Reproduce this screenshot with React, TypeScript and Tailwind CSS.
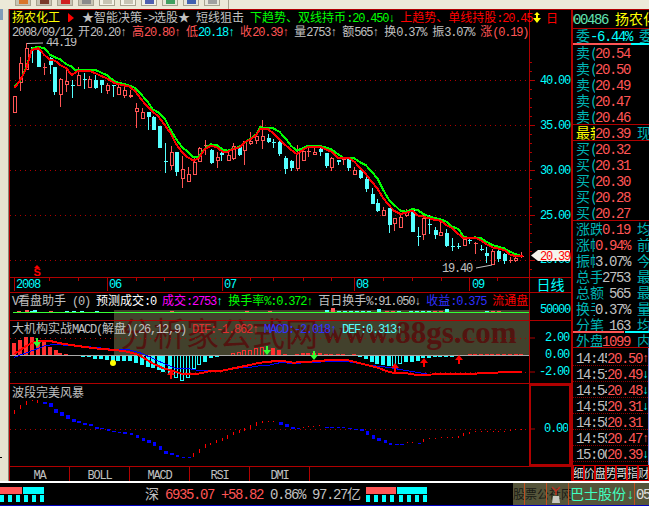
import React from "react";

const RED = "#ff5555";
const CYAN = "#55ffff";

// candles read off the chart: [x, wickTop, wickBottom, bodyTop, bodyBottom, colour]
type Candle = [number, number, number, number, number, "r" | "c"];

const candlesLeft: Candle[] = [
  [43, 168, 218, 168, 218, "r"], [61, 50, 152, 70, 128, "r"], [79, 10, 90, 25, 88, "r"], [97, 20, 68, 22, 25, "c"],
  [115, 30, 80, 30, 80, "c"], [133, 70, 105, 82, 84, "r"], [151, 50, 102, 55, 75, "c"], [163, 80, 165, 80, 155, "c"],
  [181, 115, 200, 117, 163, "r"], [199, 85, 155, 123, 133, "r"], [217, 120, 173, 134, 136, "c"], [233, 80, 137, 105, 137, "r"],
  [251, 100, 147, 118, 122, "c"], [268, 108, 143, 118, 143, "r"], [286, 105, 147, 120, 145, "c"], [302, 120, 158, 120, 135, "c"],
  [320, 130, 162, 135, 152, "r"], [338, 135, 170, 136, 138, "c"], [355, 135, 165, 141, 162, "r"], [371, 140, 173, 150, 165, "r"],
  [389, 150, 173, 165, 170, "r"], [407, 190, 265, 205, 215, "r"], [425, 205, 237, 217, 235, "r"], [443, 215, 270, 217, 232, "c"],
  [458, 228, 270, 230, 270, "c"], [476, 258, 323, 258, 323, "c"], [494, 310, 398, 363, 366, "c"], [512, 318, 390, 337, 377, "r"],
  [527, 335, 407, 337, 395, "c"], [545, 348, 443, 388, 415, "r"], [563, 380, 425, 403, 425, "r"], [581, 355, 402, 367, 402, "r"],
  [596, 322, 365, 325, 365, "r"], [614, 300, 345, 316, 320, "r"], [632, 327, 372, 330, 370, "c"], [650, 337, 385, 352, 362, "r"],
  [664, 337, 362, 338, 345, "c"], [683, 335, 360, 345, 360, "r"], [700, 308, 360, 318, 355, "r"], [718, 315, 348, 322, 345, "c"],
  [733, 305, 375, 305, 330, "r"], [751, 275, 315, 305, 310, "r"], [769, 280, 312, 290, 300, "r"],
];

const candlesRight: Candle[] = [
  [7, 30, 118, 78, 90, "r"], [25, 72, 100, 83, 95, "c"], [40, 88, 113, 96, 98, "c"], [58, 88, 138, 95, 132, "c"],
  [76, 138, 192, 144, 177, "c"], [94, 150, 183, 152, 175, "c"], [110, 105, 183, 130, 175, "r"], [128, 112, 153, 123, 152, "r"],
  [145, 110, 140, 124, 126, "r"], [163, 110, 135, 128, 133, "r"], [179, 112, 138, 117, 125, "c"], [197, 128, 173, 128, 168, "c"],
  [214, 140, 183, 145, 172, "r"], [233, 150, 165, 150, 156, "c"], [249, 143, 165, 148, 152, "r"], [265, 145, 182, 148, 175, "c"],
  [283, 172, 195, 180, 192, "r"], [301, 178, 207, 180, 203, "c"], [317, 195, 247, 208, 237, "c"], [335, 235, 282, 252, 282, "c"],
  [352, 268, 307, 280, 303, "c"], [370, 290, 318, 300, 316, "r"], [386, 294, 368, 294, 344, "c"], [403, 323, 363, 326, 340, "r"],
  [421, 310, 355, 322, 353, "r"], [439, 298, 322, 305, 316, "r"], [457, 295, 366, 295, 365, "c"], [473, 350, 408, 379, 381, "c"],
  [490, 315, 390, 325, 373, "r"], [508, 315, 372, 342, 344, "c"], [526, 350, 388, 360, 375, "c"], [541, 330, 378, 366, 377, "r"],
  [559, 357, 410, 370, 408, "c"], [577, 385, 423, 409, 411, "c"], [595, 400, 417, 407, 409, "c"], [611, 377, 408, 388, 407, "r"],
  [628, 385, 403, 389, 391, "c"], [646, 395, 432, 399, 401, "r"], [664, 405, 423, 417, 419, "c"], [679, 410, 458, 428, 437, "c"],
  [697, 418, 466, 423, 463, "r"], [715, 420, 455, 423, 446, "c"], [733, 430, 462, 432, 452, "c"], [749, 440, 460, 449, 451, "r"],
  [766, 440, 456, 445, 452, "r"], [784, 425, 443, 439, 441, "r"],
];

const leftPts = (pts: number[][]) => pts.map(([x, y]) => `${x / 3},${40 + y / 3}`).join(" ");
const rightPts = (pts: number[][]) => pts.map(([x, y]) => `${260 + x / 3},${110 + y / 3}`).join(" ");

const maRed =
  leftPts([[43,145],[61,120],[79,85],[95,30],[115,25],[133,45],[151,60],[165,62],[181,75],[199,85],[215,105],[233,93],[268,92],[286,100],[320,115],[345,130],[389,140],[407,155],[425,180],[443,200],[458,215],[476,230],[494,255],[512,280],[527,310],[545,335],[563,352],[581,362],[596,355],[614,328],[632,317],[650,322],[668,335],[683,335],[700,327],[718,322],[733,307],[751,298],[769,285]]) +
  " " +
  rightPts([[0,58],[25,58],[40,70],[58,88],[76,105],[94,120],[110,132],[128,120],[145,110],[179,110],[197,118],[214,125],[233,143],[265,143],[283,155],[301,175],[317,192],[335,215],[352,235],[370,265],[386,285],[403,303],[421,312],[439,308],[457,302],[473,316],[490,320],[526,330],[541,332],[559,345],[577,355],[595,372],[611,385],[628,385],[646,383],[664,392],[679,402],[697,412],[733,420],[749,433],[766,438],[788,438]]);

const maGreen =
  leftPts([[43,140],[61,122],[79,82],[97,25],[115,20],[133,25],[151,45],[165,52],[181,58],[199,73],[215,80],[225,90],[268,90],[286,90],[320,105],[345,125],[389,137],[407,145],[425,165],[443,185],[458,208],[476,218],[494,235],[512,270],[527,295],[545,320],[563,335],[581,352],[596,350],[614,326],[632,313],[650,315],[668,328],[683,332],[718,320],[769,283]]) +
  " " +
  rightPts([[0,52],[40,55],[58,65],[76,85],[94,108],[110,122],[128,115],[145,107],[179,108],[197,112],[214,118],[233,132],[249,143],[283,145],[301,157],[317,165],[335,185],[352,205],[370,240],[386,268],[403,285],[421,302],[439,305],[457,297],[473,300],[490,312],[508,320],[541,328],[559,335],[577,350],[595,357],[611,380],[628,385],[646,382],[664,385],[679,395],[697,405],[733,415],[749,425],[766,432],[784,438]]);

const macdRed =
  [[43,282],[61,270],[79,258],[97,248],[115,245],[133,243],[151,243],[181,250],[233,258],[286,265],[320,268],[371,273],[407,282],[425,290],[458,310],[490,325],[527,335],[545,341],[596,341],[632,333],[668,332],[700,325],[750,315],[780,308]].map(([x, y]) => `${x / 3},${260 + y / 3}`).join(" ") +
  " " +
  [[0,308],[30,305],[60,302],[100,308],[150,305],[200,301],[265,301],[300,310],[350,322],[385,335],[405,340],[440,340],[470,345],[560,342],[620,342],[700,338],[785,335]].map(([x, y]) => `${260 + x / 3},${260 + y / 3}`).join(" ");

const macdBlue =
  [[43,292],[61,285],[97,272],[133,258],[160,253],[233,258],[286,262],[338,268],[389,270],[425,280],[458,295],[490,310],[527,325],[563,325],[596,332],[632,332],[668,330],[700,325],[750,322],[780,317]].map(([x, y]) => `${x / 3},${260 + y / 3}`).join(" ") +
  " " +
  [[0,315],[30,315],[60,308],[100,310],[150,308],[200,305],[265,305],[320,315],[385,322],[440,332],[500,342],[600,345],[650,342],[700,338],[785,338]].map(([x, y]) => `${260 + x / 3},${260 + y / 3}`).join(" ");

// histogram: [page x, tip y in crop coords, colour, hollow]
const macdBarsLeft: [number, number, string, boolean?][] = [
  [43,248,"r"],[61,240,"r"],[79,232,"r"],[97,230,"r"],[115,240,"r"],[133,243,"r"],[151,260,"r"],[167,270,"r"],[181,278,"r"],[199,283,"r"],
  [250,290,"c"],[268,292,"c"],[286,297,"c"],[302,297,"c"],[320,300,"c"],[338,303,"c"],[355,303,"c"],[371,303,"c"],[389,303,"c"],[407,310,"c"],[425,315,"c"],[443,320,"c"],[458,325,"c"],[476,330,"c"],[490,335,"c"],[510,345,"c"],[527,352,"c",true],[545,362,"c",true],[563,352,"c",true],[581,325,"c",true],[596,313,"c",true],[614,305,"c"],[632,295,"c"],[650,290,"c"],
  [700,280,"r",true],[717,278,"r",true],[733,272,"r",true],[751,270,"r",true],[769,265,"r",true],[785,262,"r",true],
];
const macdBarsRight: [number, number, string, boolean?][] = [
  [5,262,"r",true],[40,264,"r"],[58,270,"r"],[75,281,"r"],[110,282,"r"],[128,280,"r"],[145,280,"r"],[163,280,"r"],[179,278,"r"],[197,282,"r"],[214,282,"r"],[233,282,"r"],[249,282,"r"],[283,282,"r"],
  [300,292,"c"],[317,297,"c"],[335,305,"c"],[352,312,"c"],[370,315,"c"],[386,318,"c"],[403,315,"c",true],[421,310,"c",true],[439,305,"c"],[457,305,"c"],[473,303,"c"],[490,295,"c"],[508,293,"c"],[526,290,"c"],[541,290,"c"],[559,290,"c"],[577,292,"c"],
  [630,282,"r"],[645,282,"r"],[662,282,"r"],[680,282,"r"],[697,283,"r"],[715,282,"r"],[732,283,"r"],[750,283,"r"],[767,282,"r"],[784,283,"r"],
];

// wave dots: [crop x, crop y, blue?]
const waveLeft: [number, number, boolean][] = [
  [43,96,false],[61,82,false],[79,68,false],[95,60,false],[112,64,false],[130,70,true],[148,74,true],[163,92,true],[181,101,true],[199,112,true],[217,121,true],[232,126,true],[250,131,true],[268,135,true],[286,144,true],[301,146,true],[320,150,true],[337,155,true],[353,156,true],[370,159,true],[389,162,true],[407,170,true],[425,178,true],[442,185,true],[458,192,true],[476,204,true],[493,218,true],[511,222,true],[527,229,true],[545,232,true],[563,232,true],[580,226,false],[596,212,false],[614,197,false],[631,192,false],[649,185,false],[665,178,false],[682,170,false],[700,160,false],[717,155,false],[733,148,false],[751,140,false],[769,132,false],[787,125,false],[805,124,false],[820,124,false],[838,130,true],[856,137,true],[874,145,true],[890,146,true],
];
const waveRight: [number, number, boolean][] = [
  [5,146,true],[20,146,true],[38,142,false],[55,140,false],[70,139,false],[88,136,false],[105,143,true],[120,142,true],[140,143,true],[155,143,true],[175,145,true],[192,148,true],[210,150,true],[227,158,true],[245,170,true],[262,178,true],[281,185,true],[296,192,true],[315,193,true],[330,193,true],[350,187,false],[365,186,false],[383,190,true],[400,182,false],[418,176,false],[436,175,false],[454,172,false],[470,171,false],[487,171,false],[505,171,false],[520,163,false],[538,158,false],[555,154,false],[573,154,false],[590,153,false],[608,153,false],[625,153,false],[642,153,false],[660,151,false],[675,148,false],[693,147,false],
];
const waveDots = [
  ...waveLeft.map(([x, y, b]) => ({ x: x / 3, y: 380 + y / 3, blue: b })),
  ...waveRight.map(([x, y, b]) => ({ x: 290 + x / 3, y: 380 + y / 3, blue: b })),
];

const volBars: [number, number, string][] = [
  [17,1,RED],[25,2,RED],[30,1,CYAN],[33,2,CYAN],[49,1,RED],[65,1,CYAN],[72,1,CYAN],[80,1,CYAN],[95,1,CYAN],[170,1,RED],[245,1,RED],[268,1,RED],[325,2,CYAN],[331,4,RED],[337,1,CYAN],[343,1,CYAN],[349,1,CYAN],[355,1,CYAN],[361,1,CYAN],[367,1,CYAN],[377,3,CYAN],[385,1,RED],[391,1,RED],[397,1,CYAN],[409,1,CYAN],[415,1,CYAN],[421,1,CYAN],[427,1,CYAN],[433,1,RED],[439,1,RED],[445,3,CYAN],[485,1,CYAN],[491,1,RED],[497,1,RED],
];

function T({ text, big, className }: { text: string; big?: boolean; className?: string }) {
  const parts = text.split(/([^\x00-\x7f↑↓]+)/);
  return (
    <span className={className}>
      {parts.map((part, i) =>
        i % 2 === 1 ? (
          <span key={i} className={big ? "font-['Noto_Sans_CJK_SC'] text-[14px]" : "font-['Noto_Sans_CJK_SC'] text-[12px]"}>
            {part}
          </span>
        ) : (
          <span key={i} className={big ? "font-['Liberation_Mono'] text-[14px] tracking-[-1.4px]" : "font-['Liberation_Mono'] text-[12px] tracking-[-1.2px]"}>
            {part}
          </span>
        )
      )}
    </span>
  );
}

function Candles({ data, ox, oy }: { data: Candle[]; ox: number; oy: number }) {
  return (
    <g shapeRendering="crispEdges">
      {data.map(([zx, wt, wb, bt, bb, c], i) => {
        const x = Math.round(ox + zx / 3) + 0.5;
        const color = c === "r" ? RED : CYAN;
        const top = oy + bt / 3;
        const h = Math.max(1, (bb - bt) / 3);
        return (
          <g key={i}>
            <line x1={x} x2={x} y1={oy + wt / 3} y2={oy + wb / 3} stroke={color} />
            {h <= 1.5 ? (
              <rect x={x - 2} y={top} width={4} height={1} fill={color} />
            ) : c === "r" ? (
              <rect x={x - 1.5} y={top} width={3} height={h} fill="#000" stroke={color} />
            ) : (
              <rect x={x - 1.5} y={top} width={3.5} height={h} fill={color} />
            )}
          </g>
        );
      })}
    </g>
  );
}

function AxisText({ x, y, fill = "#00ffff", children }: { x: number; y: number; fill?: string; children: React.ReactNode }) {
  return (
    <text x={x} y={y} fill={fill} className="font-['Liberation_Mono'] text-[12px] tracking-[-1.2px]">
      {children}
    </text>
  );
}

function Arrow({ x, y, up, color }: { x: number; y: number; up?: boolean; color: string }) {
  const s = up ? -1 : 1;
  return (
    <polygon
      fill={color}
      points={`${x - 1},${y - 4 * s} ${x + 1},${y - 4 * s} ${x + 1},${y} ${x + 4},${y} ${x},${y + 5 * s} ${x - 4},${y} ${x - 1},${y}`}
    />
  );
}

function Meter({ wide }: { wide?: boolean }) {
  const squares = wide ? [0, 1, 2, 3, 4, 5, 6, 7] : [0, 1, 2, 3, 4, 5];
  return (
    <div className={wide ? "w-[61px] shrink-0 pt-[4px]" : "w-[44px] shrink-0 pt-[4px]"}>
      <div className="flex h-[7px] gap-px">
        <div className="flex-1 bg-[#ff5555]" />
        <div className="flex-1 bg-[#00ffff]" />
      </div>
      <div className="mt-[1px] flex h-[7px] justify-between">
        {squares.map((s) => (
          <div key={s} className="w-[4px] bg-[#00ffff]" />
        ))}
      </div>
    </div>
  );
}

function QuoteRow({ label, value, tail, valueClass = "text-[#ff5555]" }: { label: string; value: string; tail?: string; valueClass?: string }) {
  return (
    <div className="flex h-4 items-center whitespace-pre pl-[3px] leading-4">
      <div className="min-w-0 flex-1 overflow-hidden">
        <T big text={label} className="text-[#00b4b4]" />
      </div>
      <T big text={value} className={`shrink-0 ${valueClass}`} />
      <div className="ml-[7px] w-[12px] shrink-0 overflow-hidden">
        {tail ? <T big text={tail} className="text-[#00b4b4]" /> : null}
      </div>
    </div>
  );
}

const sells = ["20.54", "20.50", "20.49", "20.47", "20.46"];
const buys = ["20.32", "20.31", "20.30", "20.28", "20.27"];
const stats = [
  { label: "涨跌", value: "0.19", tail: "均", valueClass: "text-[#ff5555]" },
  { label: "涨幅", value: "0.94%", tail: "前", valueClass: "text-[#ff5555]" },
  { label: "振幅", value: "3.07%", tail: "今", valueClass: "text-[#c0c0c0]" },
  { label: "总手", value: "2753", tail: "最", valueClass: "text-[#c0c0c0]" },
  { label: "总额", value: "565", tail: "最", valueClass: "text-[#c0c0c0]" },
  { label: "换手", value: "0.37%", tail: "量", valueClass: "text-[#c0c0c0]" },
];
const trades = [
  { time: "14:45", price: "20.50", arrow: "↑", up: true },
  { time: "14:51", price: "20.49", arrow: "↓", up: false },
  { time: "14:54", price: "20.48", arrow: "↓", up: false },
  { time: "14:55", price: "20.31", arrow: "↓", up: false },
  { time: "14:58", price: "20.31", arrow: "", up: false },
  { time: "14:59", price: "20.47", arrow: "↑", up: true },
  { time: "15:00", price: "20.39", arrow: "↓", up: false },
];
const tabs = ["MA", "BOLL", "MACD", "RSI", "DMI"];
const panelTabs = ["细", "价", "盘", "势", "哥", "指", "财"];
const toolButtons = [
  { bg: "bg-[#c8c4b4]", color: "#d9752a" },
  { bg: "bg-[#c8c4b4]", color: "#7a3a2a" },
  { bg: "bg-[#c8c4b4]", color: "#d02020" },
  { bg: "bg-[#c8c4b4]", color: "#8a8a8a" },
  { bg: "bg-[#f4f2e8]", color: "#c8c4b4" },
  { bg: "bg-[#f4f2e8]", color: "#c8c4b4" },
  { bg: "bg-[#f4f2e8]", color: "#5060b0" },
  { bg: "bg-[#e8e6da]", color: "#40a060" },
  { bg: "bg-[#e8e6da]", color: "#4060b0" },
  { bg: "bg-[#e8e6da]", color: "#a0a0a0" },
];

export default function App() {
  return (
    <div className="flex h-[506px] w-[649px] flex-col overflow-hidden bg-black">
      {/* toolbar */}
      <div className="flex h-[9px] items-start gap-[5px] bg-[#ece9d8] pl-[15px]">
        {toolButtons.map((b, i) => (
          <div key={i} className={`flex h-[6px] w-[16px] items-start justify-center border border-t-0 border-[#a8a490] ${b.bg}`}>
            <div className="h-[4px] w-[9px]" style={{ backgroundColor: b.color }} />
          </div>
        ))}
        <div className="ml-[3px] h-[9px] w-px bg-[#a8a490]" />
      </div>

      <div className="flex h-[472px]">
        {/* left strip */}
        <div className="w-[9px] shrink-0 border-r border-[#8a8878] bg-[#e6e3d0]">
          <div className="h-[11px] w-[3px] bg-[#7f9db9]" />
          <div className="mt-[437px] h-px w-[2px] bg-black" />
        </div>

        {/* chart column */}
        <div className="relative w-[562px] shrink-0 border-t border-l border-[#b00000]">
          {/* watermark sits under the panes */}
          <div className="absolute top-[300px] left-[104px] flex h-[45px] w-[416px] items-center overflow-hidden whitespace-pre bg-[#42412c] pl-[6px] leading-[45px] text-[#521410]">
            <span className="font-['Noto_Sans_CJK_SC'] text-[33px]">分析家公式网</span>
            <span className="ml-[4px] font-['Liberation_Serif'] text-[31px] font-bold">www.88gs.com</span>
          </div>

          {/* main pane */}
          <div className="relative flex h-[267px]">
            <div className="relative z-10 w-[519px]">
              <div className="flex h-[14px] items-center whitespace-pre pl-[2px] leading-[14px]">
                <T text="扬农化工" className="text-[#ffff00]" />
                <svg width="6" height="9" viewBox="0 0 6 9" className="ml-[8px] mr-[8px] shrink-0">
                  <polygon points="0,0 6,5 1,9 0,9" fill="#ff0000" />
                </svg>
                <T text="★智能决策->选股★ 短线狙击 " className="text-[#c0c0c0]" />
                <T text="下趋势、双线持币:20.450↓ " className="text-[#00ff00]" />
                <T text="上趋势、单线持股:20.45" className="text-[#ff0000]" />
              </div>
              <div className="flex h-[14px] items-center whitespace-pre pl-[2px] leading-[14px]">
                <T text="2008/09/12 开20.20↑ " className="text-[#c0c0c0]" />
                <T text="高20.80↑ " className="text-[#ff5555]" />
                <T text="低" className="text-[#ff5555]" />
                <T text="20.18↑ " className="text-[#00ffff]" />
                <T text="收20.39↑ " className="text-[#ff5555]" />
                <T text="量2753↑ 额565↑ 换0.37% 振3.07% " className="text-[#c0c0c0]" />
                <T text="涨(0.19)" className="text-[#ff5555]" />
              </div>
              <svg width="519" height="239" viewBox="10 38 519 239" className="block">
                {[80.5, 125.5, 170.5, 215.5, 260.5].map((y) => (
                  <line key={y} x1="10" x2="529" y1={y} y2={y} stroke="#b00000" strokeDasharray="1 4" />
                ))}
                <Candles data={candlesLeft} ox={0} oy={40} />
                <Candles data={candlesRight} ox={260} oy={110} />
                <polyline points={maGreen} fill="none" stroke="#00ff00" strokeWidth="2" shapeRendering="crispEdges" />
                <polyline points={maRed} fill="none" stroke="#ff0000" strokeWidth="2" shapeRendering="crispEdges" />
                <polyline points="27,43.5 43,43" fill="none" stroke="#c0c0c0" />
                <AxisText x={46} y={46} fill="#c0c0c0">44.19</AxisText>
                <AxisText x={442} y={272} fill="#c0c0c0">19.40</AxisText>
                <polyline points="476,268 492,265" fill="none" stroke="#c0c0c0" />
                <polygon points="37,265 34,268 40,268" fill="#ff0000" />
                <text x="33.5" y="276" fill="#ff0000" className="font-['Liberation_Sans'] text-[11px] font-bold">S</text>
              </svg>
            </div>
            <div className="relative w-[42px] border-l border-[#b00000]">
              <div className="flex h-[14px] items-center pl-[3px]">
                <svg width="8" height="11" viewBox="0 0 8 11" className="shrink-0">
                  <path d="M4 0 L7 3 L5 3 L5 6 L8 6 L4 11 L0 6 L3 6 L3 3 L1 3 Z" fill="#ffff00" />
                </svg>
                <T text="日" className="ml-[5px] text-[#ff0000]" />
              </div>
              <svg width="41" height="253" viewBox="530 24 41 253" className="block">
                <g stroke="#b00000" shapeRendering="crispEdges">
                  {[80, 125, 170, 215, 260].map((y) => (
                    <line key={y} x1="530" x2="535" y1={y} y2={y} />
                  ))}
                  {[62, 71, 89, 98, 107, 116, 134, 143, 152, 161, 179, 188, 197, 206, 224, 233, 242, 251, 269].map((y) => (
                    <line key={y} x1="530" x2="532" y1={y} y2={y} />
                  ))}
                </g>
                <AxisText x={540} y={84}>40.00</AxisText>
                <AxisText x={540} y={129}>35.00</AxisText>
                <AxisText x={540} y={174}>30.00</AxisText>
                <AxisText x={540} y={219}>25.00</AxisText>
                <AxisText x={540} y={263}>20.00</AxisText>
                <polygon points="531,255.5 538,250 570,250 570,261 538,261" fill="#f4f4ec" />
                <AxisText x={540} y={259.5} fill="#ff0000">20.39</AxisText>
              </svg>
            </div>
          </div>

          {/* date axis */}
          <div className="relative flex h-[15px] border-t border-[#b00000]">
            <div className="relative z-10 w-[519px]">
              <svg width="519" height="14" viewBox="10 278 519 14" className="block">
                <g stroke="#b00000" shapeRendering="crispEdges">
                  {[14, 107, 222, 354, 469].map((x) => (
                    <line key={x} x1={x} x2={x} y1="278" y2="291" />
                  ))}
                  {[49, 78, 136, 164, 193, 250, 273, 303, 331, 383, 412, 441, 497].map((x) => (
                    <line key={x} x1={x} x2={x} y1="278" y2="281" />
                  ))}
                </g>
                <AxisText x={16} y={288}>2008</AxisText>
                <AxisText x={109} y={288}>06</AxisText>
                <AxisText x={224} y={288}>07</AxisText>
                <AxisText x={356} y={288}>08</AxisText>
                <AxisText x={472} y={288}>09</AxisText>
              </svg>
            </div>
            <div className="flex w-[42px] items-center justify-center border-l border-[#b00000] leading-[14px]">
              <T big text="日线" className="text-[#00ffff]" />
            </div>
          </div>

          {/* volume helper pane */}
          <div className="relative flex h-[28px] border-t border-[#b00000]">
            <div className="relative z-10 w-[519px]">
              <div className="flex h-[14px] items-center whitespace-pre pl-[2px] leading-[14px]">
                <T text="V看盘助手 (0) " className="text-[#c0c0c0]" />
                <T text="预测成交:0 " className="text-[#ffffff]" />
                <T text="成交:2753" className="text-[#ff00ff]" />
                <T text="↑ " className="text-[#00ffff]" />
                <T text="换手率%:0.372↑ " className="text-[#00ff00]" />
                <T text="百日换手%:91.050↓ " className="text-[#c0c0c0]" />
                <T text="收益:0.375 " className="text-[#3030ff]" />
                <T text="流通盘" className="text-[#ff0000]" />
              </div>
              <svg width="519" height="13" viewBox="10 307 519 13" className="block">
                <g shapeRendering="crispEdges">
                  {volBars.map(([x, h, color]) => (
                    <rect key={x} x={x} y={312 - h} width="4" height={h} fill={color} />
                  ))}
                  <line x1="13" x2="529" y1="312.5" y2="312.5" stroke="#33ff33" />
                </g>
              </svg>
            </div>
            <div className="w-[42px] border-l border-[#b00000] pt-[7px] pl-[10px] leading-[14px]">
              <T text="50000" className="text-[#00ffff]" />
            </div>
          </div>

          {/* MACD pane */}
          <div className="relative flex h-[63px] border-t border-[#b00000]">
            <div className="relative z-10 w-[519px]">
              <div className="flex h-[14px] items-center whitespace-pre pl-[2px] leading-[14px]">
                <T text="大机构实战MACD(解盘)(26,12,9) " className="text-[#c0c0c0]" />
                <T text="DIF:-1.862↑ " className="text-[#e03030]" />
                <T text="MACD:-2.018↑ " className="text-[#3030ff]" />
                <T text="DEF:0.313↑" className="text-[#55ffff]" />
              </div>
              <svg width="519" height="48" viewBox="10 335 519 48" className="block">
                <line x1="10" x2="529" y1="338.5" y2="338.5" stroke="#b00000" strokeDasharray="1 4" />
                <line x1="10" x2="529" y1="372.5" y2="372.5" stroke="#b00000" strokeDasharray="1 4" />
                <g shapeRendering="crispEdges">
                  {[...macdBarsLeft.map(([x, y, c, h]) => [x / 3, y, c, h] as const), ...macdBarsRight.map(([x, y, c, h]) => [260 + x / 3, y, c, h] as const)].map(([x, y, c, hollow], i) => {
                    const tip = 260 + y / 3;
                    const top = Math.min(tip, 355);
                    const height = Math.abs(tip - 355);
                    const color = c === "r" ? "#ff3030" : "#22ffff";
                    return hollow ? (
                      <rect key={i} x={Math.round(x) - 1.5} y={top} width="3" height={height} fill="none" stroke={color} />
                    ) : (
                      <rect key={i} x={Math.round(x) - 2} y={top} width="4" height={height} fill={color} />
                    );
                  })}
                  <rect x="10" y="355" width="519" height="1" fill="#a8a8a8" />
                </g>
                <polyline points={macdBlue} fill="none" stroke="#0000ff" strokeWidth="1" shapeRendering="crispEdges" />
                <polyline points={macdRed} fill="none" stroke="#ff0000" strokeWidth="2" shapeRendering="crispEdges" />
                <Arrow x={37} y={342} color="#33ff33" />
                <Arrow x={267} y={350} color="#33ff33" />
                <Arrow x={314} y={355} color="#33ff33" />
                <Arrow x={171} y={375} up color="#ff0000" />
                <Arrow x={395} y={368} up color="#ff0000" />
                <Arrow x={424} y={363} up color="#ff0000" />
                <Arrow x={459} y={360} up color="#ff0000" />
                <circle cx="113" cy="363" r="3" fill="#ffff00" />
              </svg>
            </div>
            <div className="w-[42px] border-l border-[#b00000]">
              <svg width="41" height="62" viewBox="530 321 41 62" className="block">
                <line x1="530" x2="535" y1="338" y2="338" stroke="#b00000" />
                <line x1="530" x2="535" y1="372" y2="372" stroke="#b00000" />
                <AxisText x={545} y={341}>2.00</AxisText>
                <AxisText x={545} y={358}>0.00</AxisText>
                <AxisText x={539} y={375}>-2.00</AxisText>
              </svg>
            </div>
          </div>

          {/* wave pane */}
          <div className="relative flex h-[83px] border-t border-[#b00000]">
            <div className="relative z-10 w-[519px]">
              <div className="h-[14px] whitespace-pre pl-[2px] leading-[14px]">
                <T text="波段完美风暴" className="text-[#c0c0c0]" />
              </div>
              <svg width="519" height="68" viewBox="10 398 519 68" className="block">
                <line x1="10" x2="529" y1="429.5" y2="429.5" stroke="#b00000" strokeDasharray="1 4" />
                <g shapeRendering="crispEdges">
                  {waveDots.map((d, i) => {
                    const prev = waveDots[Math.max(i - 1, 0)];
                    const next = waveDots[Math.min(i + 1, waveDots.length - 1)];
                    const slope = Math.abs(next.y - prev.y);
                    const h = Math.min(4, Math.max(1, d.blue ? slope * 0.6 : slope * 0.7));
                    const w = d.blue ? 3.5 : 1;
                    return <rect key={i} x={d.x} y={d.y - h / 2} width={w} height={h} fill={d.blue ? "#0000ff" : "#ff0000"} />;
                  })}
                </g>
              </svg>
            </div>
            <div className="w-[42px] border-2 border-[#b00000]">
              <svg width="37" height="77" viewBox="532 386 37 77" className="block">
                <line x1="532" x2="536" y1="429" y2="429" stroke="#b00000" />
                <AxisText x={545} y={432}>0.00</AxisText>
              </svg>
            </div>
          </div>

          {/* tabs */}
          <div className="relative flex h-[15px] border-t border-[#b00000]">
            {tabs.map((tab) => (
              <div key={tab} className="flex w-[60px] items-center justify-center border-r border-[#b00000] leading-[14px]">
                <T text={tab} className="text-[#c0c0c0]" />
              </div>
            ))}
          </div>
        </div>

        {/* quote panel */}
        <div className="flex w-[78px] shrink-0 flex-col border-t border-l-2 border-[#b00000]">
          <div className="flex h-[19px] items-center overflow-hidden whitespace-pre border-b border-[#b00000] leading-4">
            <T big text="000486" className="ml-[-7px] text-[#60e0b0]" />
            <T big text="扬农化工" className="ml-[7px] text-[#ffff00]" />
          </div>
          <div className="flex h-[14px] items-center overflow-hidden whitespace-pre pl-[3px] leading-[14px]">
            <T big text="委" className="text-[#00b4b4]" />
            <T big text="-6.44%" className="text-[#00ffff]" />
            <T big text="委" className="ml-[7px] text-[#00b4b4]" />
          </div>
          <div className="flex h-[2px]">
            <div className="w-[58px] bg-[#ff5555]" />
            <div className="flex-1 bg-[#00ffff]" />
          </div>
          <div className="h-[80px] overflow-hidden border-b border-[#b00000]">
            {sells.map((v) => (
              <QuoteRow key={v} label="卖(" value={v} />
            ))}
          </div>
          <div className="flex h-[16px] items-center overflow-hidden whitespace-pre border-b border-[#b00000] pl-[3px] leading-4">
            <div className="min-w-0 flex-1 overflow-hidden">
              <T big text="最新" className="text-[#ffff00]" />
            </div>
            <T big text="20.39" className="shrink-0 text-[#ff5555]" />
            <div className="ml-[7px] w-[12px] shrink-0 overflow-hidden">
              <T big text="现" className="text-[#00b4b4]" />
            </div>
          </div>
          <div className="h-[80px] overflow-hidden border-b border-[#b00000]">
            {buys.map((v) => (
              <QuoteRow key={v} label="买(" value={v} />
            ))}
          </div>
          {stats.map((s) => (
            <QuoteRow key={s.label} label={s.label} value={s.value} tail={s.tail} valueClass={s.valueClass} />
          ))}
          <div className="h-[14px] overflow-hidden">
            <QuoteRow label="分笔" value="163" tail="均" valueClass="text-[#c0c0c0]" />
          </div>
          <div className="flex h-[2px]">
            <div className="w-[51px] bg-[#ff5555]" />
            <div className="ml-px flex-1 bg-[#00ffff]" />
          </div>
          <div className="h-[15px] overflow-hidden border-b border-[#b00000]">
            <QuoteRow label="外盘" value="1099" tail="内" />
          </div>
          <div className="flex-1 border-r border-[#7f8fe0] pt-[2px]">
            {trades.map((t) => (
              <div key={t.time} className="flex h-4 items-center overflow-hidden whitespace-pre border-b border-dotted border-[#900000] pl-[3px] leading-4">
                <div className="min-w-0 flex-1 overflow-hidden">
                  <T big text={t.time} className="text-[#c0c0c0]" />
                </div>
                <T big text={t.price} className="shrink-0 text-[#ff5555]" />
                <div className="w-[6px] shrink-0 overflow-hidden">
                  <T text={t.arrow} className={t.up ? "text-[#ff5555]" : "text-[#00ffff]"} />
                </div>
              </div>
            ))}
          </div>
          <div className="flex h-[16px] overflow-hidden">
            {panelTabs.map((tab) => (
              <div key={tab} className="flex flex-1 items-center justify-center overflow-hidden border border-[#d00000] leading-[14px]">
                <T text={tab} className="text-[#d8d8d8]" />
              </div>
            ))}
          </div>
        </div>
      </div>

      {/* status bar */}
      <div className="h-[2px] bg-white" />
      <div className="flex h-[23px] items-start border-b border-[#0000c0] bg-black">
        <Meter />
        <div className="ml-[101px] flex h-[22px] items-center whitespace-pre leading-[22px]">
          <T big text="深" className="mr-[6px] text-[#c0c0c0]" />
          <T big text="6935.07 +58.82 " className="text-[#ff5555]" />
          <T big text="0.86% " className="text-[#c0c0c0]" />
          <T big text="97.27亿" className="text-[#c0c0c0]" />
        </div>
        <div className="ml-[5px]">
          <Meter wide />
        </div>
        <div className="relative ml-[86px] flex h-[22px] flex-1 items-center overflow-hidden whitespace-pre bg-[#55553a] leading-[22px]">
          <T text="股票公社网" className="text-[#1a1a14]" />
          <div className="absolute top-0 left-[11px] h-full w-px bg-[#c05020]" />
          <div className="absolute top-0 left-[33px] h-full w-px bg-[#c05020]" />
          <div className="absolute top-0 left-[55px] h-full w-px bg-[#c05020]" />
          <div className="absolute top-0 left-[121px] h-full w-px bg-[#c05020]" />
          <svg width="9" height="18" viewBox="0 0 9 18" className="absolute top-[3px] left-[39px]">
            <path d="M0 1 L4 5 L8 1 M4 5 L4 9" stroke="#c03020" strokeWidth="1.5" fill="none" />
            <polygon points="1,10 7,10 8,17 0,17" fill="#c8c8c0" />
          </svg>
          <T big text="巴士股份↓" className="absolute left-[57px] text-[#40ffc0]" />
          <T big text="05:" className="absolute left-[123px] text-[#e0e0e0]" />
        </div>
      </div>
    </div>
  );
}
